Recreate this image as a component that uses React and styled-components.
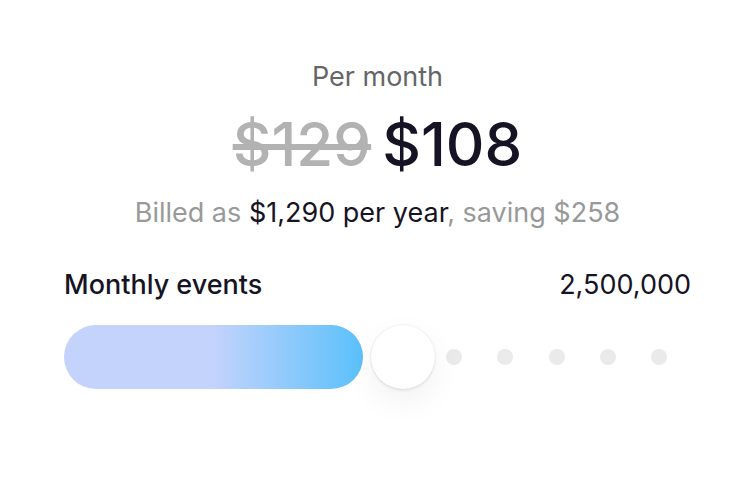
import React, { useState } from "react";
import styled, { createGlobalStyle } from "styled-components";

const GlobalStyle = createGlobalStyle`
  * { box-sizing: border-box; }
  body { margin: 0; background: #fff; }
`;

const Card = styled.main`
  padding: 59px 64px 64px;
  font-family: Inter, "Liberation Sans", sans-serif;
  color: #161424;
  font-size: 27px;
  line-height: 36px;
`;

const Period = styled.p`
  margin: 0;
  text-align: center;
  color: #666;
`;

const Prices = styled.div`
  display: flex;
  justify-content: center;
  gap: 11px;
  margin-top: 11px;
  font-size: 60px;
  line-height: 76px;
  font-weight: 500;
`;

const OldPrice = styled.s`
  color: #b2b2b2;
  text-decoration-thickness: 6px;
`;

const Price = styled.strong`
  font-weight: 500;
`;

const Billing = styled.p`
  margin: 13px 0 0;
  text-align: center;
  color: #999;
`;

const Highlight = styled.span`
  color: #161424;
`;

const UsageRow = styled.div`
  display: flex;
  justify-content: space-between;
  margin-top: 36px;
`;

const UsageLabel = styled.label`
  font-weight: 500;
`;

const Slider = styled.div`
  display: grid;
  align-items: center;
  height: 64px;
  margin-top: 22px;
  > * { grid-area: 1 / 1; }
`;

const Track = styled.div`
  display: flex;
  align-items: center;
  height: 64px;
`;

const Fill = styled.div`
  height: 64px;
  border-radius: 32px;
  background: linear-gradient(90deg, #c3d3fc 50%, #5bc0fb 100%);
`;

const Dots = styled.div`
  flex: 1;
  display: flex;
  justify-content: space-between;
  padding: 0 24px 0 83px;
`;

const Dot = styled.span`
  width: 16px;
  height: 16px;
  border-radius: 50%;
  background: #eaeaea;
`;

const Range = styled.input`
  appearance: none;
  width: 100%;
  height: 64px;
  margin: 0;
  background: transparent;
  cursor: pointer;
  &::-webkit-slider-thumb {
    appearance: none;
    width: 64px;
    height: 64px;
    border-radius: 50%;
    background: #fff;
    box-shadow: 0 0 2px rgba(0, 0, 0, 0.12), 0 2px 3px rgba(0, 0, 0, 0.06), 0 12px 32px rgba(0, 0, 0, 0.06);
  }
`;

const volumes = [
  10000, 50000, 100000, 250000, 500000, 1000000,
  2500000, 5000000, 10000000, 25000000, 50000000, 100000000,
];
const lastStep = volumes.length - 1;

export default function App() {
  const [step, setStep] = useState(6);
  return (
    <>
      <GlobalStyle />
      <Card>
        <Period>Per month</Period>
        <Prices><OldPrice>$129</OldPrice><Price>$108</Price></Prices>
        <Billing>Billed as <Highlight>$1,290 per year</Highlight>, saving $258</Billing>
        <UsageRow>
          <UsageLabel htmlFor="events">Monthly events</UsageLabel>
          <output htmlFor="events">{volumes[step].toLocaleString("en-US")}</output>
        </UsageRow>
        <Slider>
          <Track>
            <Fill style={{ width: `max(0px, calc((100% - 64px) * ${step / lastStep} - 8px))` }} />
            <Dots>{volumes.slice(step + 1).map((volume) => <Dot key={volume} />)}</Dots>
          </Track>
          <Range id="events" type="range" min="0" max={lastStep} value={step} onChange={(e) => setStep(Number(e.target.value))} />
        </Slider>
      </Card>
    </>
  );
}
